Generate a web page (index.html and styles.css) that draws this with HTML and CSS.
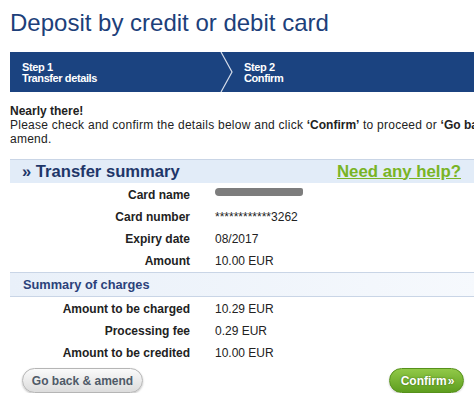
FILE: index.html
```html
<!DOCTYPE html>
<html>
<head>
<meta charset="utf-8">
<link rel="stylesheet" href="styles.css">
</head>
<body>
<div class="page">
  <h1 class="title">Deposit by credit or debit card</h1>
  <div class="steps">
    <div class="step step-first"><span>Step 1</span><span>Transfer details</span></div>
    <svg class="sep" width="14" height="40" viewBox="0 0 14 40"><polyline points="1,0 12,20 1,40" fill="none" stroke="#d6dde9" stroke-width="1.2"/></svg>
    <div class="step step-second"><span>Step 2</span><span>Confirm</span></div>
  </div>
  <p class="intro"><strong>Nearly there!</strong><br>Please check and confirm the details below and click <strong>‘Confirm’</strong> to proceed or <strong>‘Go back &amp;</strong> amend.</p>
  <section class="summary">
    <div class="band">
      <h2 class="band-title">» Transfer summary</h2>
      <a class="help" href="#">Need any help?</a>
    </div>
    <dl class="rows">
      <dt>Card name</dt><dd><span class="blur"></span></dd>
      <dt>Card number</dt><dd>************3262</dd>
      <dt>Expiry date</dt><dd>08/2017</dd>
      <dt>Amount</dt><dd>10.00 EUR</dd>
    </dl>
    <div class="band band-sub">
      <h3 class="sub-title">Summary of charges</h3>
    </div>
    <dl class="rows">
      <dt>Amount to be charged</dt><dd>10.29 EUR</dd>
      <dt>Processing fee</dt><dd>0.29 EUR</dd>
      <dt>Amount to be credited</dt><dd>10.00 EUR</dd>
    </dl>
  </section>
  <div class="actions">
    <button class="btn btn-back">Go back &amp; amend</button>
    <button class="btn btn-confirm">Confirm<span class="raquo">»</span></button>
  </div>
</div>
</body>
</html>
```
FILE: styles.css
```css
html { overflow: hidden; background: #fff; }
body {
  margin: 0;
  font-family: "Liberation Sans", Arial, sans-serif;
  color: #222;
  font-size: 12px;
}
.page {
  padding: 9px 0 0 10px;
  width: 464px;
}
.title {
  margin: 0;
  font-size: 24px;
  line-height: 28px;
  font-weight: normal;
  color: #1d3f7a;
}
.steps {
  margin-top: 15px;
  height: 40px;
  background: #1b4380;
  display: flex;
  width: 480px;
}
.step {
  display: flex;
  flex-direction: column;
  justify-content: center;
  color: #fff;
  font-weight: bold;
  font-size: 11px;
  line-height: 11px;
  letter-spacing: -0.4px;
  padding-top: 1px;
}
.step-first { width: 198px; padding-left: 12px; }
.sep { flex: none; }
.step-second { padding-left: 10px; }
.intro {
  margin: 12px 0 0;
  width: 505px;
  line-height: 14px;
  letter-spacing: 0.25px;
}
.intro strong { letter-spacing: 0; }
.summary { margin-top: 13px; width: 470px; }
.band {
  border-top: 1px solid #c9d5e6;
  background: #e2ecf8;
  height: 23px;
  display: flex;
  align-items: center;
  justify-content: space-between;
  padding: 0 13px 0 12px;
}
.band-title {
  margin: 0;
  font-size: 16.6px;
  color: #1e3669;
  line-height: 20px;
}
.help {
  font-size: 16.8px;
  font-weight: bold;
  color: #79b425;
  text-decoration: underline;
  line-height: 20px;
  margin-right: 6px;
}
.rows {
  margin: 0;
  padding-top: 1px;
  display: grid;
  grid-template-columns: 180px 1fr;
  column-gap: 25px;
  grid-auto-rows: 22px;
  align-items: center;
}
.rows dt { font-weight: bold; text-align: right; }
.rows dd { margin: 0; }
.blur {
  display: block;
  width: 88px;
  height: 8px;
  margin-top: -6px;
  background: #7d7d7d;
  border-radius: 4px 2px 3px 4px;
  filter: blur(0.7px);
}
.band-sub {
  background: linear-gradient(to right, #e9f0f9, #f6f9fd);
  border-bottom: 1px solid #c9d5e6;
  padding-left: 13px;
}
.sub-title {
  margin: 0;
  font-size: 12.8px;
  color: #2b427a;
}
.actions {
  display: flex;
  justify-content: space-between;
  margin-top: 4px;
  padding: 0 10px 0 12px;
}
.btn {
  height: 25px;
  border-radius: 13px;
  font-family: "Liberation Sans", Arial, sans-serif;
  font-weight: bold;
  font-size: 12px;
  padding: 0;
  cursor: pointer;
}
.btn-back {
  width: 121px;
  color: #4f5a68;
  background: linear-gradient(#fafafa, #dcdcdc);
  border: 1px solid #b5b5b5;
  box-shadow: 0 1px 2px rgba(0,0,0,0.25);
}
.btn-confirm {
  width: 75px;
  color: #fff;
  background: linear-gradient(#91c948, #5e9e1f);
  border: 1px solid #56911b;
  text-shadow: 0 0 2px rgba(40,80,10,0.7);
  box-shadow: 0 1px 2px rgba(0,0,0,0.2);
  padding-left: 2px;
}
.raquo { margin-left: 1px; }
```
